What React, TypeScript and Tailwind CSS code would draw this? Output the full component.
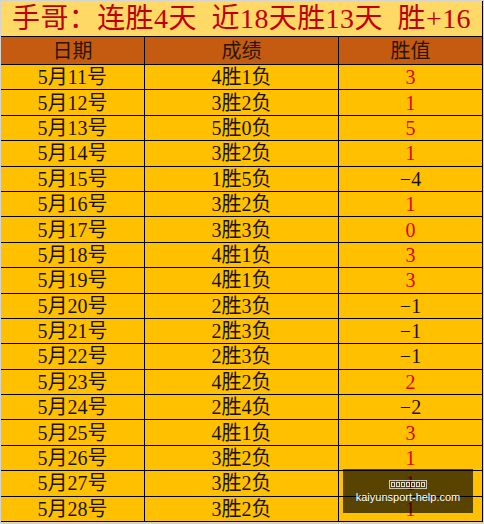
import React from 'react';

type Row = { date: string; result: string; value: string; win: boolean };

const rows: Row[] = [
  { date: '5月11号', result: '4胜1负', value: '3', win: true },
  { date: '5月12号', result: '3胜2负', value: '1', win: true },
  { date: '5月13号', result: '5胜0负', value: '5', win: true },
  { date: '5月14号', result: '3胜2负', value: '1', win: true },
  { date: '5月15号', result: '1胜5负', value: '−4', win: false },
  { date: '5月16号', result: '3胜2负', value: '1', win: true },
  { date: '5月17号', result: '3胜3负', value: '0', win: true },
  { date: '5月18号', result: '4胜1负', value: '3', win: true },
  { date: '5月19号', result: '4胜1负', value: '3', win: true },
  { date: '5月20号', result: '2胜3负', value: '−1', win: false },
  { date: '5月21号', result: '2胜3负', value: '−1', win: false },
  { date: '5月22号', result: '2胜3负', value: '−1', win: false },
  { date: '5月23号', result: '4胜2负', value: '2', win: true },
  { date: '5月24号', result: '2胜4负', value: '−2', win: false },
  { date: '5月25号', result: '4胜1负', value: '3', win: true },
  { date: '5月26号', result: '3胜2负', value: '1', win: true },
  { date: '5月27号', result: '3胜2负', value: '1', win: true },
  { date: '5月28号', result: '3胜2负', value: '1', win: true },
];

const font = { fontFamily: '"Liberation Serif", "Noto Sans CJK SC", serif' };

export default function App() {
  return (
    <div className="relative w-[484px] h-[524px] bg-[#d4d4d4] pl-[1px] pt-[1px] overflow-hidden" style={font}>
      <div className="w-[482px] border-r border-black">
        {/* title */}
        <div className="h-[36px] bg-[#ffd966] border-b border-black flex items-center justify-center text-[28px] tracking-[0.4px] text-[#c00000] leading-none">
          手哥：连胜4天&nbsp;&nbsp;近18天胜13天&nbsp;&nbsp;胜+16
        </div>

        {/* header */}
        <div className="h-[28px] bg-[#c55a11] border-b border-black flex text-[20px] text-[#2a1600] leading-none">
          <div className="w-[144px] border-r border-black flex items-center justify-center pt-[1px]">日期</div>
          <div className="w-[194px] border-r border-black flex items-center justify-center pt-[1px]">成绩</div>
          <div className="flex-1 flex items-center justify-center pt-[1px]">胜值</div>
        </div>

        {/* rows */}
        {rows.map((r) => (
          <div key={r.date} className="h-[25.4px] bg-[#ffc000] border-b border-black flex text-[20px] leading-none">
            <div className="w-[144px] border-r border-black flex items-center justify-center text-[#1a1200]">{r.date}</div>
            <div className="w-[194px] border-r border-black flex items-center justify-center text-[#1a1200]">{r.result}</div>
            <div className={`flex-1 flex items-center justify-center ${r.win ? 'text-[#e00000]' : 'text-[#1a1200]'}`}>{r.value}</div>
          </div>
        ))}
      </div>

      {/* watermark overlay */}
      <div className="absolute left-[343px] top-[469px] w-[130px] h-[44px] bg-black/65 flex flex-col items-center justify-center gap-[3px]">
        <div className="flex gap-[1px] border border-white/70 px-[1px] py-[1px]">
          {Array.from({ length: 7 }).map((_, i) => (
            <span key={i} className="block w-[4px] h-[5px] border border-white/80" />
          ))}
        </div>
        <div className="text-[11px] leading-none text-white" style={{ fontFamily: '"Liberation Sans", Arial, sans-serif' }}>
          kaiyunsport-help.com
        </div>
      </div>
    </div>
  );
}
